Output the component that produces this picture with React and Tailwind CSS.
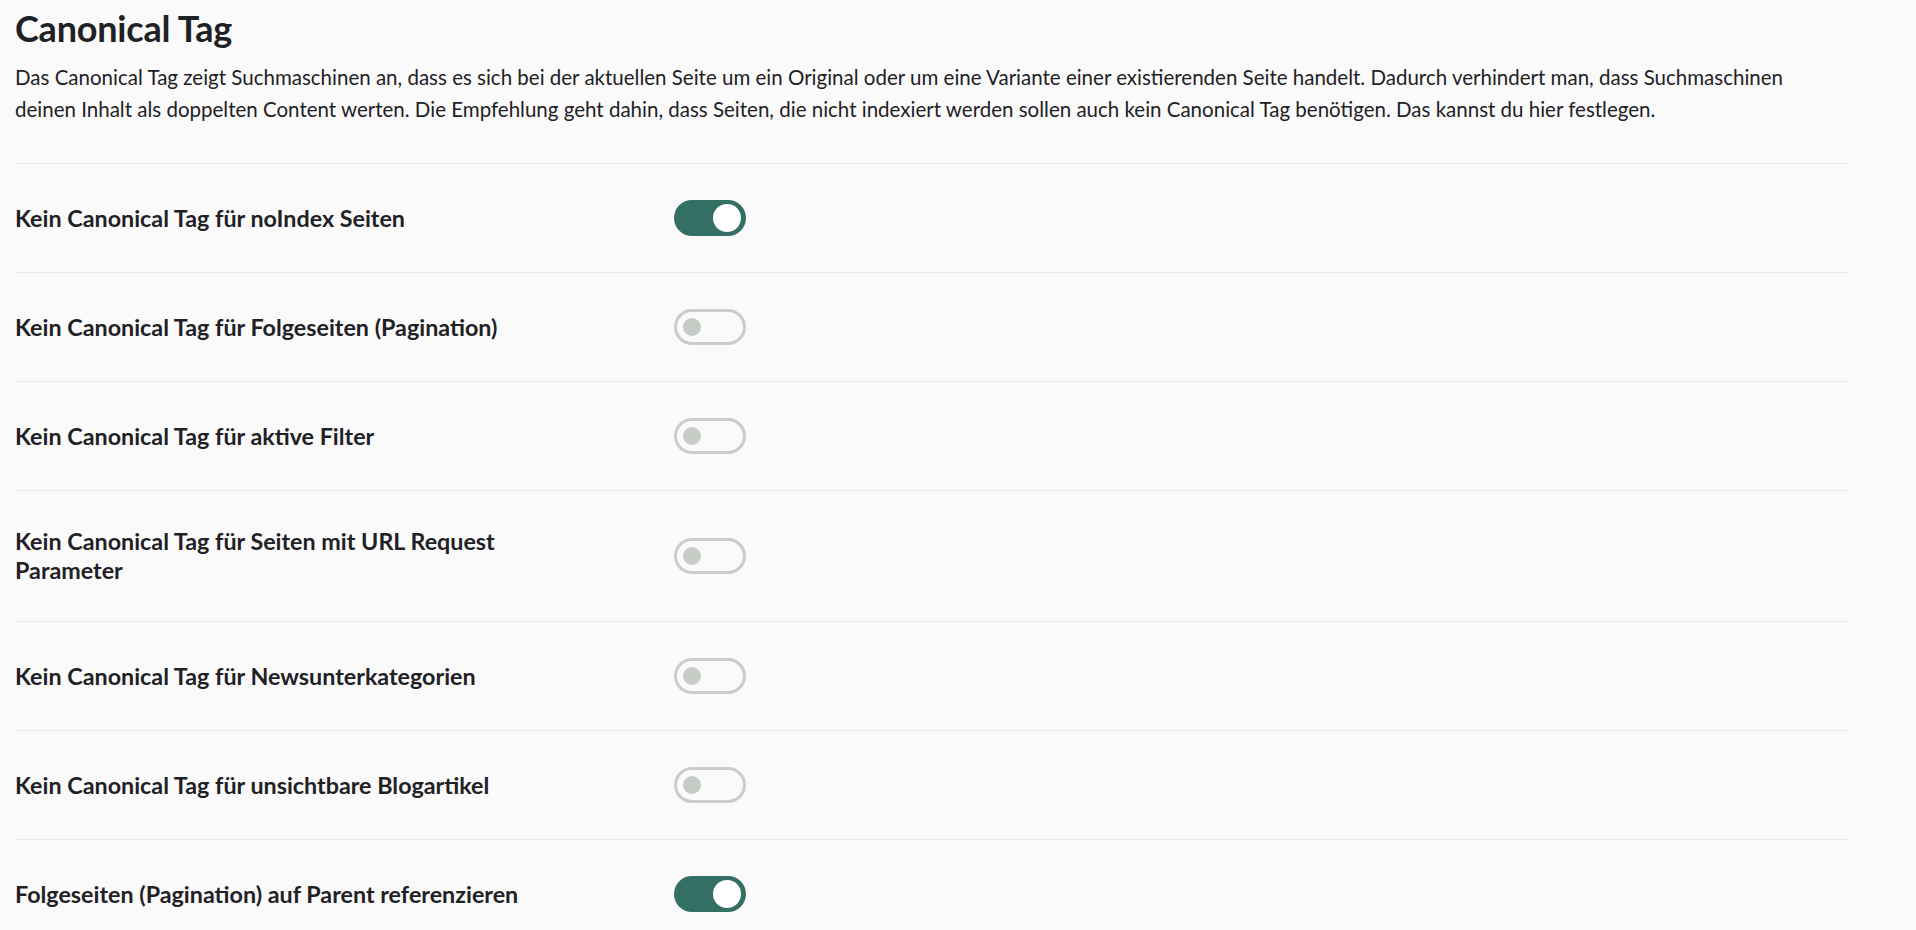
import React from "react";

const rows = [
  { label: "Kein Canonical Tag für noIndex Seiten", on: true },
  { label: "Kein Canonical Tag für Folgeseiten (Pagination)", on: false },
  { label: "Kein Canonical Tag für aktive Filter", on: false },
  { label: "Kein Canonical Tag für Seiten mit URL Request Parameter", on: false },
  { label: "Kein Canonical Tag für Newsunterkategorien", on: false },
  { label: "Kein Canonical Tag für unsichtbare Blogartikel", on: false },
  { label: "Folgeseiten (Pagination) auf Parent referenzieren", on: true },
];

function Toggle({ on }) {
  if (on) {
    return (
      <div className="relative w-[72px] h-[36px] rounded-full bg-[#346f63] shrink-0">
        <div className="absolute right-[5px] top-[4px] w-[28px] h-[28px] rounded-full bg-white" />
      </div>
    );
  }
  return (
    <div className="relative w-[72px] h-[36px] rounded-full border-[3px] border-[#c9cdc7] shrink-0">
      <div className="absolute left-[6px] top-[6px] w-[18px] h-[18px] rounded-full bg-[#c6cbc5]" />
    </div>
  );
}

export default function App() {
  return (
    <div className="min-h-screen bg-[#fafafa] text-[#1f2125] font-['Lato','Liberation_Sans',sans-serif]">
      <div className="pl-[15px] pr-[68px]">
        <h1 className="pt-[8px] text-[36px] leading-[40px] font-bold tracking-[-0.2px]">Canonical Tag</h1>
        <p className="mt-[13px] text-[20.5px] leading-[32px]">
          Das Canonical Tag zeigt Suchmaschinen an, dass es sich bei der aktuellen Seite um ein Original oder um eine Variante einer existierenden Seite handelt. Dadurch verhindert man, dass Suchmaschinen deinen Inhalt als doppelten Content werten. Die Empfehlung geht dahin, dass Seiten, die nicht indexiert werden sollen auch kein Canonical Tag benötigen. Das kannst du hier festlegen.
        </p>
        <div className="mt-[38px]">
          {rows.map((r) => (
            <div key={r.label} className="flex items-center border-t border-[#e8e8e8] py-[36px]">
              <div className="w-[659px] shrink-0 pr-[99px]">
                <div className="text-[23.3px] leading-[29px] font-bold">{r.label}</div>
              </div>
              <Toggle on={r.on} />
            </div>
          ))}
        </div>
      </div>
    </div>
  );
}
